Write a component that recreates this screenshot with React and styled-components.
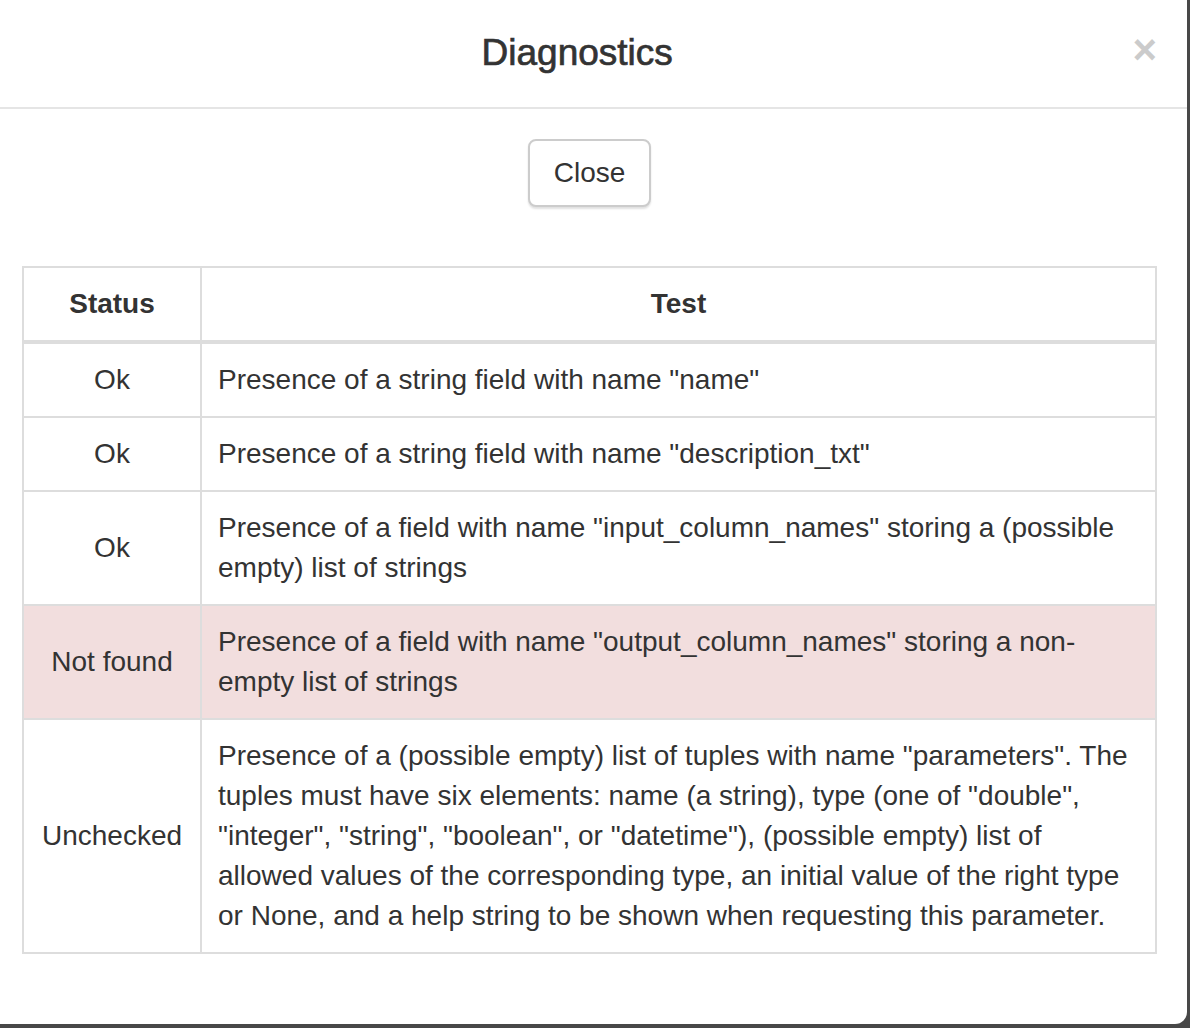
import React from 'react';
import styled, { createGlobalStyle } from 'styled-components';

const GlobalStyle = createGlobalStyle`
  html, body {
    margin: 0;
    padding: 0;
    height: 100%;
    background: #484848;
    overflow: hidden;
  }
  body {
    font-family: 'Liberation Sans', Arial, sans-serif;
    color: #333;
  }
`;

const Panel = styled.div`
  width: 1195px;
  margin: -4px 0 0 -8px;
  background: #fff;
  border-bottom-right-radius: 12px;
  box-sizing: border-box;
`;

const Header = styled.div`
  display: flex;
  align-items: flex-start;
  padding: 31px 30px 29px;
  border-bottom: 2px solid #e5e5e5;
`;

const Title = styled.h4`
  flex: 1;
  margin: 0;
  text-align: center;
  font-size: 37px;
  font-weight: 500;
  line-height: 51px;
  color: #333;
  -webkit-text-stroke: 0.7px #333;
`;

const Dismiss = styled.button`
  margin-top: -3px;
  padding: 0;
  border: 0;
  background: transparent;
  font-family: 'Liberation Sans', Arial, sans-serif;
  font-size: 42px;
  font-weight: 700;
  line-height: 51px;
  color: #000;
  opacity: 0.2;
  cursor: pointer;
`;

const Body = styled.div`
  padding: 30px;
`;

const Actions = styled.div`
  display: flex;
  justify-content: center;
  margin-bottom: 59px;
`;

const Button = styled.button`
  padding: 12px 24px;
  border: 2px solid #ccc;
  border-radius: 8px;
  background: #fff;
  color: #333;
  font-family: 'Liberation Sans', Arial, sans-serif;
  font-size: 28px;
  line-height: 40px;
  box-shadow: 0 2px 2px rgba(0, 0, 0, 0.12);
  cursor: pointer;
`;

const Table = styled.table`
  width: 100%;
  margin-bottom: 40px;
  border-collapse: collapse;
  table-layout: fixed;
  font-size: 28px;
  line-height: 40px;
`;

const Th = styled.th`
  padding: 16px;
  border: 2px solid #ddd;
  border-bottom-width: 4px;
  text-align: center;
  font-weight: 700;
`;

const Row = styled.tr`
  background: ${(p) => (p.$danger ? '#f2dede' : '#fff')};
`;

const StatusCell = styled.td`
  padding: 16px;
  border: 2px solid #ddd;
  text-align: center;
  vertical-align: middle;
`;

const TestCell = styled.td`
  padding: 16px;
  border: 2px solid #ddd;
  text-align: left;
  vertical-align: top;
`;

const rows = [
  { status: 'Ok', test: 'Presence of a string field with name "name"' },
  { status: 'Ok', test: 'Presence of a string field with name "description_txt"' },
  {
    status: 'Ok',
    test: 'Presence of a field with name "input_column_names" storing a (possible empty) list of strings',
  },
  {
    status: 'Not found',
    danger: true,
    test: 'Presence of a field with name "output_column_names" storing a non-empty list of strings',
  },
  {
    status: 'Unchecked',
    test: 'Presence of a (possible empty) list of tuples with name "parameters". The tuples must have six elements: name (a string), type (one of "double", "integer", "string", "boolean", or "datetime"), (possible empty) list of allowed values of the corresponding type, an initial value of the right type or None, and a help string to be shown when requesting this parameter.',
  },
];

const App = () => (
  <>
    <GlobalStyle />
    <Panel>
      <Header>
        <Title>Diagnostics</Title>
        <Dismiss aria-label="Close">×</Dismiss>
      </Header>
      <Body>
        <Actions>
          <Button>Close</Button>
        </Actions>
        <Table>
          <colgroup>
            <col style={{ width: '178px' }} />
            <col />
          </colgroup>
          <thead>
            <tr>
              <Th>Status</Th>
              <Th>Test</Th>
            </tr>
          </thead>
          <tbody>
            {rows.map((r, i) => (
              <Row key={i} $danger={r.danger}>
                <StatusCell>{r.status}</StatusCell>
                <TestCell>{r.test}</TestCell>
              </Row>
            ))}
          </tbody>
        </Table>
      </Body>
    </Panel>
  </>
);

export default App;
